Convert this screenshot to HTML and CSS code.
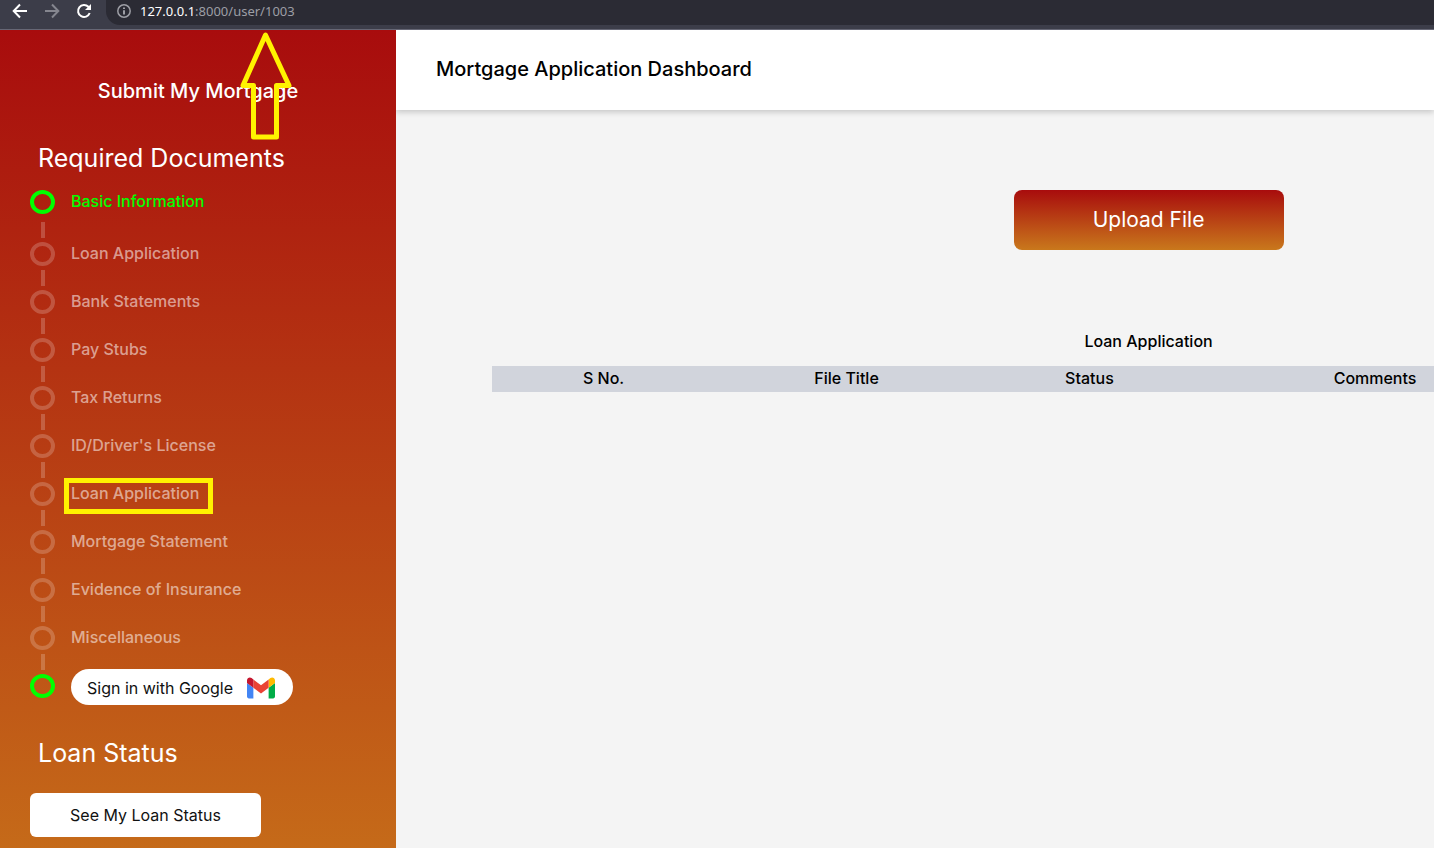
FILE: index.html
```html
<!DOCTYPE html>
<html lang="en">
<head>
<meta charset="utf-8">
<title>Mortgage Application Dashboard</title>
<link rel="stylesheet" href="styles.css">
</head>
<body>
<div class="toolbar">
  <button class="nav-button" aria-label="Back"><svg width="16" height="16" viewBox="0 0 16 16"><path d="M15 8H2M8 1.500L1.700 8L8 14.500"/></svg></button>
  <button class="nav-button nav-disabled" aria-label="Forward" disabled><svg width="16" height="16" viewBox="0 0 16 16"><path d="M1 8H14M8 1.500L14.300 8L8 14.500"/></svg></button>
  <button class="nav-button" aria-label="Reload"><svg width="16" height="16" viewBox="0 0 16 16"><path d="M13.700 10A6 6 0 1 1 12.400 3.800L14 5.500"/><path class="solid" d="M15 1V7H9Z"/></svg></button>
  <div class="address">
    <svg width="14" height="14" viewBox="0 0 14 14"><circle cx="7" cy="7" r="6.200"/><path d="M7 6.200V10.500M7 3.400V5"/></svg>
    <span><b>127.0.0.1</b>:8000/user/1003</span>
  </div>
</div>
<div class="page">
  <aside class="sidebar">
    <p class="brand">Submit My Mortgage</p>
    <h2 class="section-title">Required Documents</h2>
    <ol class="steps">
      <li class="step active"><a href="#">Basic Information</a></li>
      <li class="step"><a href="#">Loan Application</a></li>
      <li class="step"><a href="#">Bank Statements</a></li>
      <li class="step"><a href="#">Pay Stubs</a></li>
      <li class="step"><a href="#">Tax Returns</a></li>
      <li class="step"><a href="#">ID/Driver's License</a></li>
      <li class="step"><a class="marked" href="#">Loan Application</a></li>
      <li class="step"><a href="#">Mortgage Statement</a></li>
      <li class="step"><a href="#">Evidence of Insurance</a></li>
      <li class="step"><a href="#">Miscellaneous</a></li>
      <li class="step active last">
        <button class="google">Sign in with Google
          <svg width="28" height="22" viewBox="52 42 88 66"><path fill="#4285f4" d="M58 108h14V74L52 59v43c0 3.320 2.690 6 6 6"/><path fill="#00ac47" d="M120 108h14c3.320 0 6-2.690 6-6V59l-20 15"/><path fill="#ffba00" d="M120 48v26l20-15v-8c0-7.420-8.470-11.650-14.400-7.200"/><path fill="#ea4335" d="M72 74V48l24 18 24-18v26L96 92"/><path fill="#c5162e" d="M52 51v8l20 15V48l-5.600-4.200C60.470 39.350 52 43.580 52 51"/></svg>
        </button>
      </li>
    </ol>
    <h2 class="section-title">Loan Status</h2>
    <button class="status">See My Loan Status</button>
    <svg class="arrow" width="56" height="112" viewBox="0 0 56 112"><path d="M27.500 5L51 55.500H38.500V107H15.500V55.500H5Z"/></svg>
  </aside>
  <main class="main">
    <header class="header"><h1>Mortgage Application Dashboard</h1></header>
    <div class="content">
      <button class="upload">Upload File</button>
      <table class="files">
        <caption>Loan Application</caption>
        <colgroup><col class="col-number"><col class="col-title"><col class="col-state"><col class="col-comments"><col></colgroup>
        <thead><tr><th scope="col">S No.</th><th scope="col">File Title</th><th scope="col">Status</th><th scope="col">Comments</th><td></td></tr></thead>
      </table>
    </div>
  </main>
</div>
</body>
</html>
```
FILE: styles.css
```css
*, *::before, *::after { box-sizing: border-box; }
body {
  margin: 0;
  height: 100vh;
  display: flex;
  flex-direction: column;
  overflow: hidden;
  font-family: Inter, "Liberation Sans", sans-serif;
  font-size: 16px;
  color: #000;
}
button { font: inherit; border: 0; cursor: pointer; }

.toolbar {
  flex: none;
  height: 30px;
  padding: 0 0 4px 12px;
  display: flex;
  align-items: center;
  gap: 16px;
  background: #3c3d49;
  border-bottom: 1px solid #666775;
}
.nav-button {
  display: flex;
  padding: 0;
  margin-top: -3px;
  background: none;
}
.nav-button svg { fill: none; stroke: #fff; stroke-width: 2; }
.nav-button .solid { fill: #fff; stroke: none; }
.nav-disabled svg { stroke: #85868f; }
.address {
  flex: 1;
  align-self: stretch;
  padding: 0 0 3px 11px;
  margin-left: -2px;
  display: flex;
  align-items: center;
  gap: 9px;
  background: #2b2b34;
  border-radius: 0 0 0 14px;
  font: 13px/20px "Noto Sans", sans-serif;
  color: #9d9ea5;
}
.address svg { fill: none; stroke: #9d9ea5; stroke-width: 2; }
.address circle { stroke-width: 1.5; }
.address b { font-weight: 400; color: #fff; }

.page { flex: 1; display: flex; min-height: 0; }
.sidebar {
  position: relative;
  flex: none;
  width: 396px;
  padding: 46px 30px 0;
  background: linear-gradient(#a80c0d, #c56a19);
  color: #fff;
}
.brand {
  margin: 0 0 36px;
  font-size: 20px;
  line-height: 30px;
  font-weight: 500;
  text-align: center;
}
.section-title {
  margin: 0;
  padding-left: 8px;
  font-size: 25px;
  line-height: 32px;
  font-weight: 400;
}
.steps { list-style: none; margin: 16px 0 39px; padding: 0; }
.step {
  position: relative;
  height: 48px;
  display: flex;
  align-items: flex-start;
  gap: 16px;
}
.step::before {
  content: "";
  flex: none;
  width: 25px;
  height: 24px;
  border: 4px solid rgba(255, 255, 255, .2);
  border-radius: 50%;
}
.step::after {
  content: "";
  position: absolute;
  left: 11px;
  bottom: 4px;
  width: 4px;
  height: 16px;
  background: rgba(255, 255, 255, .2);
}
.step a {
  position: relative;
  line-height: 22px;
  font-weight: 500;
  color: rgba(255, 255, 255, .55);
  text-decoration: none;
}
.step.active { height: 52px; }
.step.active::before { border-color: #0f0; }
.step.active a { color: #0f0; }
.step.last { height: 24px; align-items: center; }
.step.last::after { content: none; }
.marked::after {
  content: "";
  position: absolute;
  inset: -4px -14px -10px -7px;
  border: 5px solid #fff200;
}
.google {
  flex: none;
  height: 36px;
  margin-top: 2px;
  padding: 2px 18px 0 16px;
  display: flex;
  align-items: center;
  gap: 14px;
  border-radius: 18px;
  background: #fff;
  color: #111;
}
.status {
  width: 231px;
  height: 44px;
  margin-top: 24px;
  padding-bottom: 2px;
  border-radius: 6px;
  background: #fff;
  color: #111;
}
.arrow {
  position: absolute;
  left: 238px;
  top: 0;
  fill: none;
  stroke: #fff200;
  stroke-width: 5;
  stroke-linejoin: round;
}

.main {
  flex: 1;
  min-width: 0;
  overflow: hidden;
  background: #f4f4f4;
}
.header {
  height: 80px;
  padding: 0 40px 2px;
  display: flex;
  align-items: center;
  background: #fff;
  box-shadow: 0 2px 6px rgba(0, 0, 0, .2);
}
h1 { margin: 0; font-size: 20px; line-height: 30px; font-weight: 500; }
/* The content column is wider than the visible area and runs off to the right. */
.content {
  width: 145%;
  padding: 80px 96px 0;
  display: flex;
  flex-direction: column;
  align-items: center;
}
.upload {
  width: 270px;
  height: 60px;
  padding-bottom: 2px;
  border-radius: 8px;
  background: linear-gradient(#a80c0d, #c9781c);
  color: #fff;
  font-size: 21px;
}
.files {
  width: 100%;
  margin-top: 79px;
  table-layout: fixed;
  border-collapse: collapse;
}
.files caption { padding-bottom: 13px; line-height: 24px; font-weight: 500; }
.files thead { background: #d1d4dc; }
.files th { padding: 0 0 2px; height: 26px; font-weight: 500; }
.col-number, .col-state { width: 17%; }
.col-title { width: 20%; }
.col-comments { width: 26.5%; }
```
